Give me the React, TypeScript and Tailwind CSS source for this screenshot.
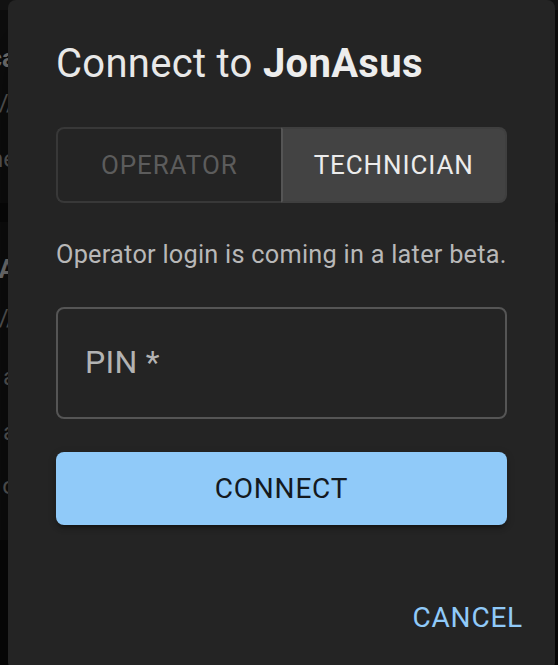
import React from 'react'

// faded page content peeking out on the left, behind the dialog
function PeekRow({ text, bold, h }: { text: string; bold?: boolean; h: string }) {
  return (
    <div className={`flex w-[16px] items-center justify-end overflow-hidden whitespace-nowrap ${h}`}>
      <span className={bold ? 'text-[26px] font-bold text-[#7d7d7d]' : 'text-[24px] text-[#5f5f5f]'}>{text}</span>
    </div>
  )
}

export default function App() {
  return (
    <div className="relative h-[665px] w-[558px] overflow-hidden bg-[#080808] font-['Roboto',sans-serif]">
      <div className="flex flex-col">
        <div className="h-[10px] bg-[#141414]" />
        <div className="flex h-[193px] flex-col bg-[#0e0e0e] pt-[28px]">
          <PeekRow text="ca" bold h="h-[40px]" />
          <PeekRow text="//" h="h-[50px]" />
          <PeekRow text="ne" h="h-[62px]" />
        </div>
        <div className="h-[19px]" />
        <div className="flex h-[318px] flex-col bg-[#0e0e0e] pt-[30px]">
          <PeekRow text="A" bold h="h-[34px]" />
          <PeekRow text="//" h="h-[64px]" />
          <PeekRow text="a" h="h-[54px]" />
          <PeekRow text="a" h="h-[56px]" />
          <PeekRow text="o" h="h-[52px]" />
        </div>
      </div>

      {/* dialog */}
      <div className="absolute left-[8px] top-0 w-[547px] rounded-[8px] bg-[#242424] shadow-[0_22px_70px_rgba(0,0,0,0.5)]">
        <h2 className="px-[48px] pt-[32px] pb-[31px] text-[40px] leading-[64px] font-normal tracking-[0.3px] text-[#e8e8e8]">
          Connect to <span className="font-bold text-[#ededed]">JonAsus</span>
        </h2>

        <div className="px-[48px] pb-[40px]">
          <div className="flex h-[76px]">
            <button
              disabled
              className="flex-1 rounded-l-[8px] border-2 border-r-0 border-[#383838] text-[26px] font-normal uppercase tracking-[0.9px] text-[#5c5c5c]"
            >
              Operator
            </button>
            <button className="flex-1 rounded-r-[8px] border-2 border-[#3f3f3f] border-l-[#555555] bg-[#434343] text-[26px] font-normal uppercase tracking-[0.9px] text-[#ececec]">
              Technician
            </button>
          </div>

          <p className="mt-[32px] whitespace-nowrap text-[25.3px] leading-[40px] tracking-[0.25px] text-[#b8b8b8]">
            Operator login is coming in a later beta.
          </p>

          <div className="mt-[32px] h-[112px] rounded-[8px] border-2 border-[#555555] pl-[27px] pt-[30px]">
            <div className="text-[32px] leading-[46px] tracking-[0.3px] text-[#b3b3b3]">PIN *</div>
          </div>

          <button className="mt-[33px] flex h-[73px] w-full items-center justify-center rounded-[8px] bg-[#90caf9] text-[28px] font-normal uppercase tracking-[0.8px] text-[#14191e] shadow-[0_6px_2px_-4px_rgba(0,0,0,0.2),0_4px_4px_0_rgba(0,0,0,0.14),0_2px_10px_0_rgba(0,0,0,0.12)]">
            Connect
          </button>
        </div>

        <div className="flex justify-end px-[16px] pt-[16px] pb-[16px]">
          <button className="px-[16px] py-[12px] text-[28px] font-normal uppercase leading-[49px] tracking-[0.8px] text-[#90caf9]">
            Cancel
          </button>
        </div>
      </div>
    </div>
  )
}
